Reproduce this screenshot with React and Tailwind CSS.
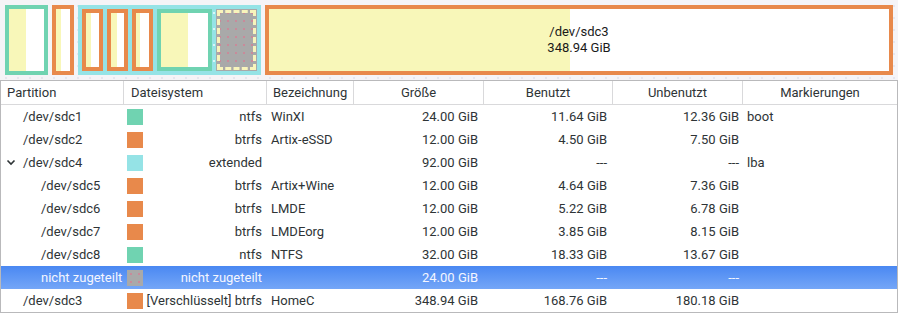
import React from "react";

const TEAL = "#70d3b1";
const ORANGE = "#e8894b";
const CYAN = "#95e3e6";
const GRAY = "#a9a9a9";

// top graphic: width / used-width of each partition box
function PartBox({ width, used, color, children }) {
  return (
    <div
      className="grid h-full shrink-0 border-4"
      style={{ width, borderColor: color }}
    >
      <div className="flex [grid-area:1/1]">
        <div className="h-full shrink-0 bg-[#f8f7b9]" style={{ width: used }} />
        <div className="h-full flex-1 bg-white" />
      </div>
      {children && (
        <div className="flex flex-col items-center justify-center text-[13px] leading-[16px] text-[#1a1a1a] [grid-area:1/1]">
          {children}
        </div>
      )}
    </div>
  );
}

function DiskMap() {
  return (
    <div className="flex h-[80px] gap-[4px] bg-[#f5f4f7] bg-[radial-gradient(circle,#e6e6ee_0.8px,transparent_1.2px)] bg-[size:12px_12px] p-[5px] pb-[5px]">
      <PartBox width={43} used={17} color={TEAL} />
      <PartBox width={22} used={5} color={ORANGE} />
      <div className="flex h-full w-[183px] shrink-0 gap-[4px] bg-[#95e3e6] bg-[radial-gradient(circle,#d8f6f7_1px,transparent_1.5px)] bg-[size:16px_16px] p-[4px]">
        <PartBox width={21} used={5} color={ORANGE} />
        <PartBox width={21} used={6} color={ORANGE} />
        <PartBox width={21} used={4} color={ORANGE} />
        <PartBox width={55} used={27} color={TEAL} />
        <div className="h-full w-[41px] shrink-0 bg-[#a9a9a9] bg-[radial-gradient(circle,#c98a9a_0.9px,transparent_1.3px)] bg-[size:8px_8px] p-[1px]">
          <div className="h-full w-full border-[3px] border-dashed border-[#f8f4bb]" />
        </div>
      </div>
      <PartBox width={628} used={301} color={ORANGE}>
        <span>/dev/sdc3</span>
        <span>348.94 GiB</span>
      </PartBox>
    </div>
  );
}

const rows = [
  { name: "/dev/sdc1", color: TEAL, fs: "ntfs", label: "WinXI", size: "24.00 GiB", used: "11.64 GiB", free: "12.36 GiB", flags: "boot" },
  { name: "/dev/sdc2", color: ORANGE, fs: "btrfs", label: "Artix-eSSD", size: "12.00 GiB", used: "4.50 GiB", free: "7.50 GiB", flags: "" },
  { name: "/dev/sdc4", color: CYAN, fs: "extended", label: "", size: "92.00 GiB", used: "---", free: "---", flags: "lba", expander: true },
  { name: "/dev/sdc5", child: true, color: ORANGE, fs: "btrfs", label: "Artix+Wine", size: "12.00 GiB", used: "4.64 GiB", free: "7.36 GiB", flags: "" },
  { name: "/dev/sdc6", child: true, color: ORANGE, fs: "btrfs", label: "LMDE", size: "12.00 GiB", used: "5.22 GiB", free: "6.78 GiB", flags: "" },
  { name: "/dev/sdc7", child: true, color: ORANGE, fs: "btrfs", label: "LMDEorg", size: "12.00 GiB", used: "3.85 GiB", free: "8.15 GiB", flags: "" },
  { name: "/dev/sdc8", child: true, color: TEAL, fs: "ntfs", label: "NTFS", size: "32.00 GiB", used: "18.33 GiB", free: "13.67 GiB", flags: "" },
  { name: "nicht zugeteilt", child: true, color: GRAY, fs: "nicht zugeteilt", label: "", size: "24.00 GiB", used: "---", free: "---", flags: "", selected: true },
  { name: "/dev/sdc3", color: ORANGE, fs: "[Verschlüsselt] btrfs", label: "HomeC", size: "348.94 GiB", used: "168.76 GiB", free: "180.18 GiB", flags: "" },
];

const cols = "grid grid-cols-[122px_143px_87px_130px_129px_130px_1fr]";

function Row({ r }) {
  return (
    <div
      className={`${cols} h-[23px] items-center whitespace-nowrap ${
        r.selected
          ? "bg-gradient-to-b from-[#4a88f2] to-[#74a6f7] text-[#f4f6ff]"
          : "bg-white text-[#2e3436]"
      }`}
    >
      <div className={`flex items-center ${r.child ? "pl-[40px]" : "pl-[22px]"} relative`}>
        {r.expander && (
          <svg
            className="absolute left-[5px] top-[4px]"
            width="10"
            height="10"
            viewBox="0 0 10 10"
            fill="none"
            stroke="#2e3436"
            strokeWidth="1.6"
          >
            <path d="M1.5 3.5 L5 7 L8.5 3.5" />
          </svg>
        )}
        {r.name}
      </div>
      <div className="flex items-center pl-[4px] pr-[4px]">
        <div
          className={`h-[16px] w-[16px] shrink-0 ${
            r.color === GRAY
              ? "bg-[radial-gradient(circle,#c98a9a_0.8px,transparent_1.2px)] bg-[size:8px_8px]"
              : ""
          }`}
          style={{ backgroundColor: r.color }}
        />
        <span className="flex-1 text-right">{r.fs}</span>
      </div>
      <div className="pl-[5px]">{r.label}</div>
      <div className="pr-[5px] text-right">{r.size}</div>
      <div className="pr-[5px] text-right">{r.used}</div>
      <div className="pr-[3px] text-right">{r.free}</div>
      <div className="pl-[5px]">{r.flags}</div>
    </div>
  );
}

export default function App() {
  return (
    <div className="h-[313px] w-[898px] overflow-hidden bg-[#f5f4f7] font-['Roboto','Liberation_Sans',sans-serif] text-[13px]">
      <DiskMap />
      <div className="w-[898px] border border-[#b9b9bb] bg-white">
        <div className={`${cols} h-[24px] items-center border-b border-[#d9d9db] text-[#2e3436]`}>
          <div className="pl-[6px]">Partition</div>
          <div className="flex h-full items-center border-l border-[#d9d9db] pl-[7px]">Dateisystem</div>
          <div className="flex h-full items-center border-l border-[#d9d9db] pl-[6px]">Bezeichnung</div>
          <div className="flex h-full items-center justify-center border-l border-[#d9d9db]">Größe</div>
          <div className="flex h-full items-center justify-center border-l border-[#d9d9db]">Benutzt</div>
          <div className="flex h-full items-center justify-center border-l border-[#d9d9db]">Unbenutzt</div>
          <div className="flex h-full items-center justify-center border-l border-[#d9d9db]">Markierungen</div>
        </div>
        {rows.map((r) => (
          <Row key={r.name} r={r} />
        ))}
      </div>
    </div>
  );
}
